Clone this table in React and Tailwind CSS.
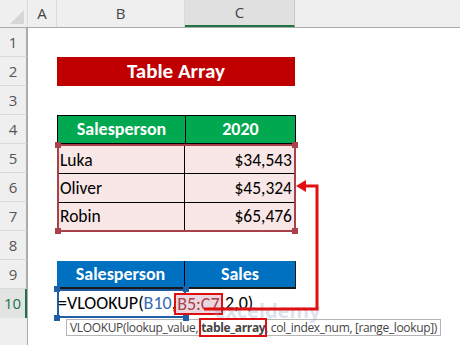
import React from "react";

const cal = "font-['Carlito','Lato',sans-serif]";

function RowHead({ n, active }) {
  if (active) {
    return (
      <div className="h-[29px] flex items-center justify-center bg-[#e1e4e2] border-r-2 border-[#217346] text-[#217346] text-[15px]">
        {n}
      </div>
    );
  }
  return (
    <div className="h-[29px] flex items-center justify-center border-b border-[#dadada] border-r border-r-[#ababab] text-[#555] text-[15px]">
      {n}
    </div>
  );
}

function Handle({ pos, color }) {
  return <div className={`absolute w-[6px] h-[6px] ${color} ${pos}`} />;
}

export default function App() {
  const rows = [1, 2, 3, 4, 5, 6, 7, 8, 9, 10];

  return (
    <div className="relative w-[460px] h-[345px] overflow-hidden bg-white font-['Open_Sans',sans-serif]">
      {/* column headers */}
      <div className="flex h-[28px] bg-[#efefef] border-b border-[#ababab] text-[#444] text-[15px]">
        <div className="w-[28px] border-r border-[#dadada] flex items-end justify-end p-[3px]">
          <svg width="14" height="14" viewBox="0 0 14 14">
            <polygon points="14,0 14,14 0,14" fill="#d6d6d6" />
          </svg>
        </div>
        <div className="w-[29px] border-r border-[#dadada] flex items-center justify-center">A</div>
        <div className="w-[128px] border-r border-[#dadada] flex items-center justify-center">B</div>
        <div className="w-[110px] bg-[#e0e0e0] border-b-2 border-[#217346] border-r border-r-[#c8c8c8] flex items-center justify-center">C</div>
        <div className="flex-1" />
      </div>

      <div className="flex">
        {/* row headers */}
        <div className="w-[28px] h-[317px] bg-[#efefef] border-r border-[#ababab] flex flex-col">
          {rows.map((n) => (
            <RowHead key={n} n={n} active={n === 10} />
          ))}
          <div className="flex-1" />
        </div>

        {/* sheet */}
        <div className={`flex-1 flex flex-col pl-[29px] ${cal}`}>
          <div className="h-[29px]" />
          <div className="h-[29px] w-[238px] bg-[#c00000] flex items-center justify-center text-white font-bold text-[21px]">
            Table Array
          </div>
          <div className="h-[29px]" />

          <div className="h-[29px] w-[239px] flex bg-[#00a84f] border border-black text-white font-bold text-[18px]">
            <div className="w-[128px] border-r border-black flex items-center justify-center">Salesperson</div>
            <div className="flex-1 flex items-center justify-center">2020</div>
          </div>

          <div className="relative h-[88px] w-[239px] bg-[#f9e6e6] border-2 border-[#a8414a] text-black text-[17.5px] flex flex-col">
            {[
              ["Luka", "$34,543"],
              ["Oliver", "$45,324"],
              ["Robin", "$65,476"],
            ].map(([name, val], i) => (
              <div key={name} className={`flex-1 flex ${i < 2 ? "border-b border-black" : ""}`}>
                <div className="w-[126px] border-r border-black flex items-center pl-[1px]">{name}</div>
                <div className="flex-1 flex items-center justify-end pr-[2px]">{val}</div>
              </div>
            ))}
            <Handle color="bg-[#a8414a]" pos="-left-[4px] -top-[4px]" />
            <Handle color="bg-[#a8414a]" pos="-right-[4px] -top-[4px]" />
            <Handle color="bg-[#a8414a]" pos="-left-[4px] -bottom-[4px]" />
            <Handle color="bg-[#a8414a]" pos="-right-[4px] -bottom-[4px]" />
          </div>

          <div className="h-[29px]" />

          <div className="h-[28px] w-[239px] flex bg-[#0070c0] border-b-2 border-r border-[#1a1a1a] text-white font-bold text-[18px]">
            <div className="w-[128px] border-r border-black flex items-center justify-center">Salesperson</div>
            <div className="flex-1 flex items-center justify-center">Sales</div>
          </div>

          <div className="relative h-[29px] w-[129px]">
            <div className="absolute inset-0 border-2 border-[#1f5fa6]" />
            <Handle color="bg-[#1f5fa6]" pos="-left-[3px] -top-[3px]" />
            <Handle color="bg-[#1f5fa6]" pos="-right-[3px] -top-[3px]" />
            <Handle color="bg-[#1f5fa6]" pos="-left-[3px] -bottom-[3px]" />
            <Handle color="bg-[#1f5fa6]" pos="-right-[3px] -bottom-[3px]" />
            <div className="relative h-full flex items-center whitespace-nowrap text-[18px] text-black pl-[1px]">
              =VLOOKUP(<span className="text-[#3569b3]">B10</span>,
              <span className="text-[#a8414a] bg-[#ead7e0] outline-2 outline-[#e01010] px-[1px] leading-[18px]">B5:C7</span>
              ,2,0)
            </div>
          </div>

          <div className="ml-[9px] mt-[1px] h-[17px] w-[375px] border border-[#b5b5b5] bg-white flex items-center px-[3px] whitespace-nowrap text-[12px] text-[#444] font-['Open_Sans',sans-serif] tracking-[-0.35px]">
            VLOOKUP(lookup_value,
            <span className="ml-[3px] font-bold outline-2 outline-[#e01010] leading-[15px]">table_array</span>
            , col_index_num, [range_lookup])
          </div>
        </div>
      </div>

      {/* watermark */}
      <div className="absolute left-[214px] top-[296px] text-[20px] font-bold text-[#8aa4c8] opacity-30 font-['Noto_Sans',sans-serif] pointer-events-none">
        exceldemy
      </div>

      {/* arrow */}
      <svg className="absolute left-0 top-0 pointer-events-none" width="460" height="345">
        <polyline points="204,309 317,309 317,186 304,186" fill="none" stroke="#e01010" strokeWidth="3" />
        <polygon points="296,186 306,180 306,192" fill="#e01010" />
      </svg>
    </div>
  );
}
